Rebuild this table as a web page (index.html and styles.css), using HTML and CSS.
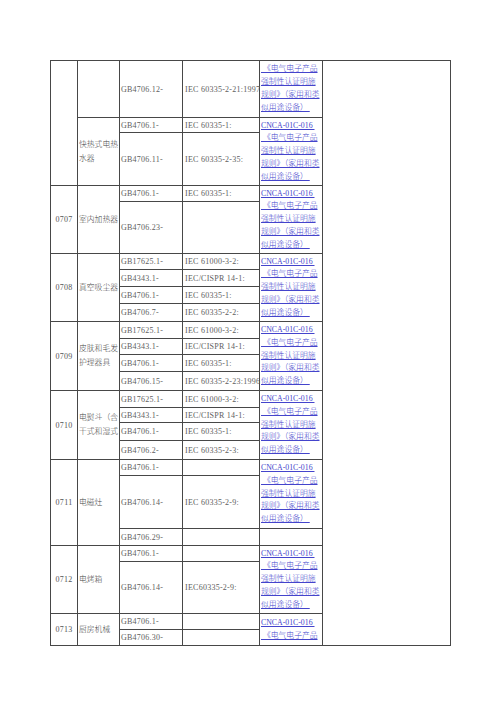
FILE: index.html
```html
<!DOCTYPE html>
<html lang="zh-CN">
<head>
<meta charset="utf-8">
<title>CCC 目录</title>
<link rel="stylesheet" href="styles.css">
</head>
<body>
<div class="page">
<table class="cat">
<colgroup>
<col class="c-code"><col class="c-name"><col class="c-gb"><col class="c-iec"><col class="c-rule"><col class="c-note">
</colgroup>
<tbody>
<tr class="h57">
  <td class="code" rowspan="3"></td>
  <td class="name"></td>
  <td class="gb">GB4706.12-</td>
  <td class="iec">IEC 60335-2-21:1997</td>
  <td class="rule"><a href="#">&nbsp;《电气电子产品<br>强制性认证明施<br>规则》（家用和类<br>似用途设备）&nbsp;</a></td>
  <td class="note" rowspan="24"></td>
</tr>
<tr class="h15">
  <td class="name" rowspan="2">快热式电热<br>水器</td>
  <td class="gb">GB4706.1-</td>
  <td class="iec">IEC 60335-1:</td>
  <td class="rule" rowspan="2"><a href="#">CNCA-01C-016&nbsp;<br>&nbsp;《电气电子产品<br>强制性认证明施<br>规则》（家用和类<br>似用途设备）&nbsp;</a></td>
</tr>
<tr class="h53">
  <td class="gb">GB4706.11-</td>
  <td class="iec">IEC 60335-2-35:</td>
</tr>

<tr class="h16">
  <td class="code" rowspan="2">0707</td>
  <td class="name" rowspan="2">室内加热器</td>
  <td class="gb">GB4706.1-</td>
  <td class="iec">IEC 60335-1:</td>
  <td class="rule" rowspan="2"><a href="#">CNCA-01C-016&nbsp;<br>&nbsp;《电气电子产品<br>强制性认证明施<br>规则》（家用和类<br>似用途设备）&nbsp;</a></td>
</tr>
<tr class="h52">
  <td class="gb">GB4706.23-</td>
  <td class="iec"></td>
</tr>

<tr class="h16">
  <td class="code" rowspan="4">0708</td>
  <td class="name" rowspan="4">真空吸尘器</td>
  <td class="gb">GB17625.1-</td>
  <td class="iec">IEC 61000-3-2:</td>
  <td class="rule" rowspan="4"><a href="#">CNCA-01C-016&nbsp;<br>&nbsp;《电气电子产品<br>强制性认证明施<br>规则》（家用和类<br>似用途设备）&nbsp;</a></td>
</tr>
<tr class="h17"><td class="gb">GB4343.1-</td><td class="iec">IEC/CISPR 14-1:</td></tr>
<tr class="h17"><td class="gb">GB4706.1-</td><td class="iec">IEC 60335-1:</td></tr>
<tr class="h18"><td class="gb">GB4706.7-</td><td class="iec">IEC 60335-2-2:</td></tr>

<tr class="h17">
  <td class="code" rowspan="4">0709</td>
  <td class="name" rowspan="4">皮肤和毛发<br>护理器具</td>
  <td class="gb">GB17625.1-</td>
  <td class="iec">IEC 61000-3-2:</td>
  <td class="rule" rowspan="4"><a href="#">CNCA-01C-016&nbsp;<br>&nbsp;《电气电子产品<br>强制性认证明施<br>规则》（家用和类<br>似用途设备）&nbsp;</a></td>
</tr>
<tr class="h16"><td class="gb">GB4343.1-</td><td class="iec">IEC/CISPR 14-1:</td></tr>
<tr class="h17"><td class="gb">GB4706.1-</td><td class="iec">IEC 60335-1:</td></tr>
<tr class="h19"><td class="gb">GB4706.15-</td><td class="iec">IEC 60335-2-23:1996</td></tr>

<tr class="h17">
  <td class="code" rowspan="4">0710</td>
  <td class="name" rowspan="4">电熨斗（含<br>干式和湿式</td>
  <td class="gb">GB17625.1-</td>
  <td class="iec">IEC 61000-3-2:</td>
  <td class="rule" rowspan="4"><a href="#">CNCA-01C-016&nbsp;<br>&nbsp;《电气电子产品<br>强制性认证明施<br>规则》（家用和类<br>似用途设备）&nbsp;</a></td>
</tr>
<tr class="h15"><td class="gb">GB4343.1-</td><td class="iec">IEC/CISPR 14-1:</td></tr>
<tr class="h18"><td class="gb">GB4706.1-</td><td class="iec">IEC 60335-1:</td></tr>
<tr class="h19"><td class="gb">GB4706.2-</td><td class="iec">IEC 60335-2-3:</td></tr>

<tr class="h16">
  <td class="code" rowspan="3">0711</td>
  <td class="name" rowspan="3">电磁灶</td>
  <td class="gb">GB4706.1-</td>
  <td class="iec"></td>
  <td class="rule" rowspan="2"><a href="#">CNCA-01C-016&nbsp;<br>&nbsp;《电气电子产品<br>强制性认证明施<br>规则》（家用和类<br>似用途设备）&nbsp;</a></td>
</tr>
<tr class="h53"><td class="gb">GB4706.14-</td><td class="iec">IEC 60335-2-9:</td></tr>
<tr class="h17"><td class="gb">GB4706.29-</td><td class="iec"></td><td class="rule"></td></tr>

<tr class="h16">
  <td class="code" rowspan="2">0712</td>
  <td class="name" rowspan="2">电烤箱</td>
  <td class="gb">GB4706.1-</td>
  <td class="iec"></td>
  <td class="rule" rowspan="2"><a href="#">CNCA-01C-016&nbsp;<br>&nbsp;《电气电子产品<br>强制性认证明施<br>规则》（家用和类<br>似用途设备）&nbsp;</a></td>
</tr>
<tr class="h52"><td class="gb">GB4706.14-</td><td class="iec">IEC60335-2-9:</td></tr>

<tr class="h16">
  <td class="code" rowspan="2">0713</td>
  <td class="name" rowspan="2">厨房机械</td>
  <td class="gb">GB4706.1-</td>
  <td class="iec"></td>
  <td class="rule" rowspan="2"><a href="#">CNCA-01C-016&nbsp;<br>&nbsp;《电气电子产品</a></td>
</tr>
<tr class="h16"><td class="gb">GB4706.30-</td><td class="iec"></td></tr>
</tbody>
</table>
</div>
</body>
</html>
```
FILE: styles.css
```css
html, body {
  margin: 0;
  padding: 0;
  background: #ffffff;
}

.page {
  padding: 60px 50px 0 50px;
  font-family: "Liberation Serif", "Noto Sans CJK SC", serif;
  font-size: 8px;
  font-weight: 300;
  color: #555555;
}

.cat {
  border-collapse: collapse;
  table-layout: fixed;
  width: 400px;
}

.c-code { width: 27px; }
.c-name { width: 42px; }
.c-gb   { width: 63px; }
.c-iec  { width: 77px; }
.c-rule { width: 63px; }
.c-note { width: 128px; }

.cat td {
  border: 1px solid #474747;
  padding: 0 0 0 1px;
  vertical-align: middle;
  white-space: nowrap;
  line-height: 13px;
  overflow: visible;
}

.cat td.code {
  text-align: center;
  padding: 0;
  color: #555555;
  letter-spacing: 0.3px;
}

.cat td.name {
  color: #444444;
  line-height: 14px;
  padding-left: 1px;
  font-size: 7.8px;
}

.cat td.gb,
.cat td.iec {
  color: #5e5e5e;
  letter-spacing: 0.25px;
}

.cat td.iec {
  padding-left: 2px;
}

.cat td.rule {
  font-size: 7.8px;
  line-height: 12.8px;
}

.cat td.rule a {
  color: #4444cc;
  text-decoration: underline;
}

.h15 { height: 15px; }
.h16 { height: 16px; }
.h17 { height: 17px; }
.h18 { height: 18px; }
.h19 { height: 19px; }
.h52 { height: 52px; }
.h53 { height: 53px; }
.h57 { height: 57px; }
```
